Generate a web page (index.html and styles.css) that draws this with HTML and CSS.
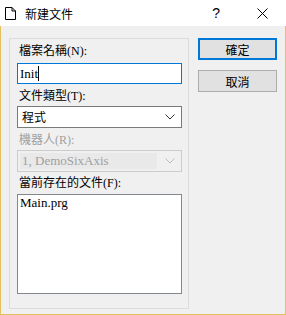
FILE: index.html
```html
<!DOCTYPE html>
<html lang="zh-Hant">
<head>
    <meta charset="UTF-8">
    <title>新建文件</title>
    <link rel="stylesheet" href="styles.css">
</head>
<body>
    <div class="window">
        <div class="titlebar">
            <svg class="title-icon" width="11" height="13" viewBox="0 0 11 13">
                <path d="M0.5 0.5 H7 L10.5 4 V12.5 H0.5 Z" fill="#fff" stroke="#000"/>
                <path d="M7 0.5 V4 H10.5" fill="none" stroke="#000"/>
            </svg>
            <span class="title-text">新建文件</span>
            <span class="title-help">?</span>
            <svg class="title-close" width="11" height="11" viewBox="0 0 11 11">
                <path d="M0.5 0.5 L10.5 10.5 M10.5 0.5 L0.5 10.5" stroke="#000" stroke-width="1"/>
            </svg>
        </div>
        <div class="client">
            <div class="panel">
                <div class="label lbl-first">檔案名稱(N):</div>
                <div class="edit"><span class="mono">Init</span><span class="caret"></span></div>
                <div class="label lbl-gap">文件類型(T):</div>
                <div class="combo">
                    <span class="combo-text">程式</span>
                    <svg class="arrow" width="10" height="6" viewBox="0 0 10 6"><path d="M0.5 0.5 L5 5 L9.5 0.5" fill="none" stroke="#333"/></svg>
                </div>
                <div class="label lbl-gap disabled">機器人(R):</div>
                <div class="combo combo-off">
                    <span class="combo-text latin">1, DemoSixAxis</span>
                    <svg class="arrow" width="10" height="6" viewBox="0 0 10 6"><path d="M0.5 0.5 L5 5 L9.5 0.5" fill="none" stroke="#bbb"/></svg>
                </div>
                <div class="label lbl-small">當前存在的文件(F):</div>
                <div class="listbox">
                    <div class="latin">Main.prg</div>
                </div>
            </div>
            <div class="buttons">
                <button class="btn default">確定</button>
                <button class="btn">取消</button>
            </div>
        </div>
    </div>
</body>
</html>
```

FILE: styles.css
```css
* {
    box-sizing: border-box;
    margin: 0;
    padding: 0;
}

body {
    font-family: "Liberation Serif", "Noto Sans CJK TC", serif;
    font-size: 12px;
    color: #000;
    background: #fff;
}

.window {
    width: 286px;
    height: 315px;
    display: flex;
    flex-direction: column;
}

.titlebar {
    height: 26px;
    background: #fff;
    display: flex;
    align-items: center;
    padding-left: 5px;
}

.title-icon {
    margin-top: 1px;
}

.title-text {
    font-family: "Noto Sans CJK SC", sans-serif;
    font-size: 12px;
    margin-left: 9px;
    color: #000;
}

.title-help {
    font-family: "Liberation Sans", sans-serif;
    font-size: 14px;
    margin-left: auto;
    margin-right: 37px;
}

.title-close {
    margin-right: 18px;
}

.client {
    flex: 1;
    background: #f0f0f0;
    border: 1px solid #e2c15e;
    border-top: none;
    display: flex;
    padding: 12px 8px 0 8px;
}

.panel {
    width: 180px;
    height: 271px;
    border: 1px solid #dcdcdc;
    padding: 0 6px 0 7px;
    display: flex;
    flex-direction: column;
}

.label {
    height: 14px;
    line-height: 14px;
    white-space: nowrap;
    padding-left: 2px;
}

.lbl-first { margin-top: 5px; }
.lbl-gap { margin-top: 5px; }
.lbl-small { margin-top: 4px; }

.disabled {
    color: #a0a0a0;
}

.edit {
    margin-top: 5px;
    height: 21px;
    background: #fff;
    border: 1px solid #0078d7;
    display: flex;
    align-items: center;
    padding-left: 2px;
    font-size: 13px;
}

.caret {
    width: 1px;
    height: 15px;
    background: #000;
}

.combo {
    margin-top: 3px;
    height: 22px;
    background: #fff;
    border: 1px solid #7a7a7a;
    display: flex;
    align-items: center;
    padding-left: 4px;
    padding-right: 6px;
}

.combo-text {
    flex: 1;
}

.combo-off {
    border-color: #cccccc;
    background: #f0f0f0;
    color: #a0a0a0;
    padding-left: 0;
    margin-top: 3px;
}

.combo-off .combo-text {
    align-self: stretch;
    display: flex;
    align-items: center;
    padding-left: 4px;
    background: #e9e9e9;
    margin: 2px 0 2px 2px;
    padding-left: 2px;
    margin-right: 8px;
}

.latin {
    font-size: 13px;
}

.listbox {
    margin-top: 4px;
    height: 100px;
    background: #fff;
    border: 1px solid #828790;
    padding: 0 2px;
}

.buttons {
    margin-left: 9px;
    display: flex;
    flex-direction: column;
    gap: 10px;
}

.btn {
    width: 79px;
    height: 22px;
    background: #e1e1e1;
    border: 1px solid #adadad;
    font-family: "Noto Sans CJK TC", sans-serif;
    font-size: 12px;
    color: #000;
}

.btn.default {
    border: 2px solid #0078d7;
}
```
